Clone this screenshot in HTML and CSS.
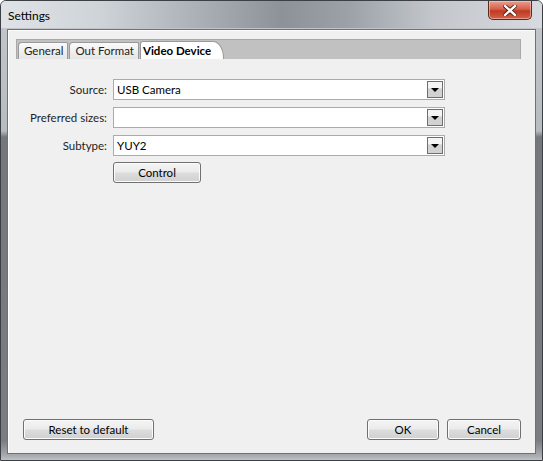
FILE: index.html
```html
<!DOCTYPE html>
<html lang="en">
<head>
  <meta charset="UTF-8">
  <title>Settings</title>
  <link rel="stylesheet" href="styles.css">
</head>
<body>

  <div class="window">
    <div class="titlebar">
      <span class="title">Settings</span>
      <button class="close-btn" title="Close">
        <svg width="14" height="11" viewBox="0 0 14 11">
          <path d="M2 1 L12 10 M12 1 L2 10" stroke="#4a1810" stroke-width="4" stroke-linecap="square"/>
          <path d="M2 1 L12 10 M12 1 L2 10" stroke="#ffffff" stroke-width="2.4" stroke-linecap="square"/>
        </svg>
      </button>
    </div>

    <div class="client">
      <div class="tab-bar">
        <div class="tab">General</div>
        <div class="tab">Out Format</div>
        <div class="tab active">Video Device</div>
      </div>

      <div class="form">
        <div class="row">
          <label class="row-label">Source:</label>
          <div class="combo">
            <span class="combo-value">USB Camera</span>
            <span class="combo-arrow"></span>
          </div>
        </div>
        <div class="row">
          <label class="row-label">Preferred sizes:</label>
          <div class="combo">
            <span class="combo-value"></span>
            <span class="combo-arrow"></span>
          </div>
        </div>
        <div class="row">
          <label class="row-label">Subtype:</label>
          <div class="combo">
            <span class="combo-value">YUY2</span>
            <span class="combo-arrow"></span>
          </div>
        </div>
        <div class="row">
          <span class="row-label"></span>
          <button class="btn control-btn">Control</button>
        </div>
      </div>

      <div class="footer">
        <button class="btn reset-btn">Reset to default</button>
        <div class="footer-right">
          <button class="btn ok-btn">OK</button>
          <button class="btn cancel-btn">Cancel</button>
        </div>
      </div>
    </div>
  </div>

</body>
</html>
```

FILE: styles.css
```css
html, body {
  margin: 0;
  padding: 0;
}

body {
  width: 543px;
  height: 461px;
  overflow: hidden;
  font-family: Lato, "Noto Sans", sans-serif;
  font-size: 11.5px;
  color: #000;
}

.window {
  box-sizing: border-box;
  width: 543px;
  height: 461px;
  border: 1px solid #3c3f44;
  border-radius: 6px 6px 0 0;
  background: linear-gradient(to bottom, #c4c8cd 0px, #b7bcc2 130px, #74787d 136px, #7a7e83 440px, #a9adb2 455px, #c9ccd0 461px);
  display: flex;
  flex-direction: column;
}

.titlebar {
  height: 27px;
  display: flex;
  align-items: flex-start;
  justify-content: space-between;
  background: linear-gradient(to right, #dfe3e7 0%, #cfd4d9 18%, #a7adb3 38%, #8c9298 52%, #9ba1a7 64%, #c3c7cc 80%, #d7dbdf 100%);
  border-radius: 5px 5px 0 0;
}

.title {
  margin: 7px 0 0 7px;
  font-size: 12px;
  color: #000;
}

.close-btn {
  width: 44px;
  height: 19px;
  margin-right: 10px;
  padding: 0;
  border: 1px solid #5a2a20;
  border-top: none;
  border-radius: 0 0 5px 5px;
  background: linear-gradient(to bottom, #e8a08f 0%, #d7604a 45%, #c13a22 55%, #d0624a 100%);
  display: flex;
  align-items: center;
  justify-content: center;
  box-shadow: inset 0 0 0 1px rgba(255, 220, 210, 0.5);
}

.client {
  flex: 1;
  margin: 1px 6px 6px 6px;
  background: #f0f0f0;
  border: 1px solid #6d7176;
  box-shadow: inset 1px 1px 0 #fdfdfd;
  display: flex;
  flex-direction: column;
}

.tab-bar {
  height: 19px;
  margin: 9px 14px 0 8px;
  background: #c1c1c1;
  border: 1px solid #a9a9a9;
  border-bottom: none;
  display: flex;
  align-items: flex-end;
  padding-left: 1px;
}

.tab {
  height: 16px;
  line-height: 16px;
  padding: 0 4px 0 5px;
  font-size: 11.5px;
  color: #222;
  background: linear-gradient(to bottom, #fafafa, #e6e6e6);
  border: 1px solid #9a9a9a;
  border-bottom: none;
  border-radius: 4px 2px 0 0;
  margin-right: 1px;
}

.tab.active {
  height: 17px;
  line-height: 17px;
  padding: 0 12px 0 2px;
  font-weight: bold;
  color: #000;
  background: #ffffff;
  border-radius: 3px 11px 0 0 / 3px 17px 0 0;
}

.form {
  display: flex;
  flex-direction: column;
  gap: 7px;
  margin-top: 20px;
}

.row {
  display: flex;
  align-items: center;
}

.row-label {
  width: 105px;
  text-align: right;
  padding-right: 6px;
  box-sizing: border-box;
  font-size: 11.5px;
  color: #1e1e1e;
}

.combo {
  box-sizing: border-box;
  width: 332px;
  height: 21px;
  background: #fff;
  border: 1px solid #ababab;
  display: flex;
  align-items: center;
  justify-content: space-between;
}

.combo-value {
  padding-left: 3px;
  font-size: 11.5px;
}

.combo-arrow {
  box-sizing: border-box;
  width: 16px;
  height: 17px;
  margin-right: 1px;
  border: 1px solid #6e6e6e;
  background: linear-gradient(to bottom, #f4f4f4 0%, #f4f4f4 40%, #d2d2d2 45%, #d2d2d2 100%);
  position: relative;
}

.combo-arrow::after {
  content: "";
  position: absolute;
  left: 3px;
  top: 6px;
  border-left: 4px solid transparent;
  border-right: 4px solid transparent;
  border-top: 4px solid #000;
}

.btn {
  box-sizing: border-box;
  height: 21px;
  padding: 0;
  font-family: Lato, "Noto Sans", sans-serif;
  font-size: 11.5px;
  color: #000;
  border: 1px solid #707070;
  border-radius: 3px;
  background: linear-gradient(to bottom, #f4f4f4 0%, #ebebeb 48%, #dddddd 52%, #d0d0d0 100%);
  box-shadow: inset 0 0 0 1px #fbfbfb;
  cursor: pointer;
}

.control-btn {
  width: 88px;
  margin-top: -1px;
}

.footer {
  margin-top: auto;
  margin-bottom: 13px;
  padding: 0 14px 0 15px;
  display: flex;
  justify-content: space-between;
}

.footer-right {
  display: flex;
  gap: 8px;
}

.reset-btn {
  width: 131px;
}

.ok-btn {
  width: 72px;
}

.cancel-btn {
  width: 74px;
}
```
